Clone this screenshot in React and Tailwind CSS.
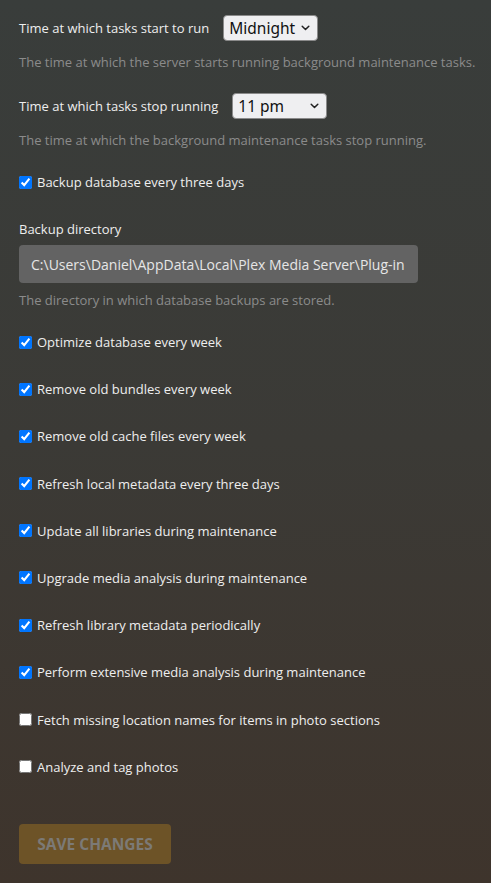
import React from "react";

function Chevron() {
  return (
    <svg className="pointer-events-none absolute right-[8px] top-1/2 -translate-y-1/2" width="9" height="6" viewBox="0 0 9 6" fill="none">
      <path d="M1.2 1.2 L4.5 4.5 L7.8 1.2" stroke="#222" strokeWidth="1.5" strokeLinecap="round" strokeLinejoin="round" />
    </svg>
  );
}

function Select({ value, options }) {
  return (
    <div className="relative w-[95px] h-[26px]">
      <select
        defaultValue={value}
        className="appearance-none w-full h-full bg-[#efeff1] text-[#111] rounded-[4px] border border-[#8a8a8a] pl-[5px] pr-[16px] text-[15.5px] leading-[24px] outline-none"
        style={{ fontFamily: '"Noto Sans", "Open Sans", sans-serif' }}
      >
        {options.map((o) => (
          <option key={o}>{o}</option>
        ))}
      </select>
      <Chevron />
    </div>
  );
}

function Check({ label, checked }) {
  return (
    <label className="flex items-center h-[18px] gap-[5px]">
      <input type="checkbox" defaultChecked={checked} className="w-[13px] h-[13px] m-0 accent-[#0075ff]" />
      <span>{label}</span>
    </label>
  );
}

export default function App() {
  const checks = [
    ["Optimize database every week", true],
    ["Remove old bundles every week", true],
    ["Remove old cache files every week", true],
    ["Refresh local metadata every three days", true],
    ["Update all libraries during maintenance", true],
    ["Upgrade media analysis during maintenance", true],
    ["Refresh library metadata periodically", true],
    ["Perform extensive media analysis during maintenance", true],
    ["Fetch missing location names for items in photo sections", false],
    ["Analyze and tag photos", false],
  ];
  return (
    <div
      className="w-full h-[883px] overflow-hidden bg-linear-to-b from-[#393d3b] via-[#3b3a36] to-[#3e342c] text-[#eeeeee] text-[13px] leading-[18px] pl-[19px] pt-[15px]"
      style={{ fontFamily: '"Open Sans", "Noto Sans", sans-serif' }}
    >
      <div className="flex items-center h-[26px]">
        <span>Time at which tasks start to run</span>
        <div className="ml-[14px]">
          <Select value="Midnight" options={["Midnight", "1 am", "2 am"]} />
        </div>
      </div>
      <p className="mt-[12px] text-[#8b8b8b] whitespace-nowrap">The time at which the server starts running background maintenance tasks.</p>

      <div className="flex items-center h-[26px] mt-[22px]">
        <span>Time at which tasks stop running</span>
        <div className="ml-[14px]">
          <Select value="11 pm" options={["10 pm", "11 pm", "Midnight"]} />
        </div>
      </div>
      <p className="mt-[12px] text-[#8b8b8b] whitespace-nowrap">The time at which the background maintenance tasks stop running.</p>

      <div className="mt-[24px]">
        <Check label="Backup database every three days" checked />
      </div>

      <div className="mt-[29px]">Backup directory</div>
      <input
        type="text"
        defaultValue="C:\Users\Daniel\AppData\Local\Plex Media Server\Plug-in Support\Databases"
        className="mt-[7px] block w-[399px] h-[38px] rounded-[4px] bg-[#636363] text-[#e6e6e6] text-[14px] px-[12px] outline-none"
      />
      <p className="mt-[8px] text-[#8b8b8b]">The directory in which database backups are stored.</p>

      <div className="mt-[24px] flex flex-col gap-[29.2px]">
        {checks.map(([l, c]) => (
          <Check key={l} label={l} checked={c} />
        ))}
      </div>

      <button
        type="button"
        disabled
        className="mt-[48px] block w-[152px] h-[40px] rounded-[4px] bg-[#6d5327] text-[#7c7a76] text-[15.5px] font-bold uppercase"
      >
        Save Changes
      </button>
    </div>
  );
}
